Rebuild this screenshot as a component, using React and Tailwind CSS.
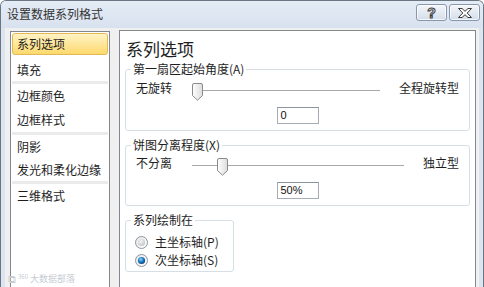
import React from "react";

const cjk = "font-['Noto_Sans_CJK_SC','Noto_Sans',sans-serif]";

const navGroups = [
  [
    { label: "系列选项", h: "h-[22px]", selected: true },
    { label: "填充", h: "h-[22px] mt-[4px]" },
  ],
  [
    { label: "边框颜色", h: "h-[24px]" },
    { label: "边框样式", h: "h-[24px]" },
  ],
  [
    { label: "阴影", h: "h-[23px]" },
    { label: "发光和柔化边缘", h: "h-[23px]" },
  ],
  [{ label: "三维格式", h: "h-[23px]" }],
];

function TitleButton({ children }) {
  return (
    <div className="w-[31px] h-[17px] rounded-[3px] border border-[#8797ad] bg-gradient-to-b from-[#f4f7fb] to-[#d3dde9] shadow-[inset_0_0_0_1px_rgba(255,255,255,0.7)] flex items-center justify-center">
      {children}
    </div>
  );
}

function Thumb() {
  return (
    <svg width="11" height="18" viewBox="0 0 11 18">
      <defs>
        <linearGradient id="thumbFill" x1="0" x2="1" y1="0" y2="0">
          <stop offset="0" stopColor="#ffffff" />
          <stop offset="1" stopColor="#dcdcdc" />
        </linearGradient>
      </defs>
      <path
        d="M2 0.5 H9 Q10.5 0.5 10.5 2 V12.5 L5.5 17.2 L0.5 12.5 V2 Q0.5 0.5 2 0.5 Z"
        fill="url(#thumbFill)"
        stroke="#8a8a8a"
      />
    </svg>
  );
}

function Slider({ pct }) {
  return (
    <div className="relative h-[16px] flex-1 ml-[20px] mr-[19px]">
      <div className="absolute left-0 right-0 top-[10px] h-px bg-[#a8a8a8]" />
      <div className="absolute top-[3px]" style={{ left: `calc((100% - 11px) * ${pct})` }}>
        <Thumb />
      </div>
    </div>
  );
}

function GroupBox({ legend, className = "", children }) {
  return (
    <div className={`relative border border-[#d5dfe5] rounded-[3px] ${className}`}>
      <span className="absolute -top-[9px] left-[5px] px-[2px] bg-white text-[12px] leading-[16px] text-[#1e1e1e] whitespace-nowrap">
        {legend}
      </span>
      {children}
    </div>
  );
}

function SliderGroup({ legend, from, to, pct, value, className = "" }) {
  return (
    <GroupBox legend={legend} className={className}>
      <div className="flex items-center h-[16px] px-[10px] text-[12px] leading-[16px] text-[#1e1e1e]">
        <span className="whitespace-nowrap">{from}</span>
        <Slider pct={pct} />
        <span className="whitespace-nowrap">{to}</span>
      </div>
      <div className="flex justify-center mt-[11px] pb-[6px]">
        <div className="w-[42px] h-[17px] border border-[#a5acb5] border-t-[#8e949c] pl-[3px] text-[11px] leading-[15px] text-[#111] font-['Liberation_Sans',sans-serif]">
          {value}
        </div>
      </div>
    </GroupBox>
  );
}

function Radio({ checked }) {
  return (
    <svg width="13" height="13" viewBox="0 0 13 13">
      <defs>
        <linearGradient id={checked ? "rOn" : "rOff"} x1="0" y1="0" x2="1" y2="1">
          <stop offset="0" stopColor="#e6e6e6" />
          <stop offset="1" stopColor="#ffffff" />
        </linearGradient>
        <radialGradient id="dot" cx="0.4" cy="0.35" r="0.7">
          <stop offset="0" stopColor="#8fd3ff" />
          <stop offset="0.5" stopColor="#1f7fc4" />
          <stop offset="1" stopColor="#0b3f74" />
        </radialGradient>
        <radialGradient id="off" cx="0.4" cy="0.35" r="0.7">
          <stop offset="0" stopColor="#f4f4f4" />
          <stop offset="1" stopColor="#c4c4c4" />
        </radialGradient>
      </defs>
      <circle cx="6.5" cy="6.5" r="6" fill={`url(#${checked ? "rOn" : "rOff"})`} stroke="#8b96a0" />
      <circle cx="6.5" cy="6.5" r="3.6" fill={checked ? "url(#dot)" : "url(#off)"} />
    </svg>
  );
}

export default function App() {
  return (
    <div className={`w-[484px] h-[287px] overflow-hidden flex flex-col bg-[#dbe4ef] border border-b-0 border-[#6b7684] rounded-t-[6px] ${cjk}`}>
      {/* title bar */}
      <div className="h-[27px] shrink-0 flex items-start bg-gradient-to-b from-[#e4ecf6] to-[#d8e2ee]">
        <div className="pl-[6px] pt-[4px] text-[12px] leading-[18px] text-[#333]">设置数据系列格式</div>
        <div className="ml-auto flex gap-[2px] pt-[3px] pr-[3px]">
          <TitleButton>
            <span className="text-[14px] leading-[14px] font-bold text-white [-webkit-text-stroke:1px_#3c3c3c] font-['Liberation_Sans',sans-serif]">?</span>
          </TitleButton>
          <TitleButton>
            <svg width="14" height="10" viewBox="0 0 14 10">
              <path
                d="M0.5 0.5 H4 L7 3.3 L10 0.5 H13.5 L9.2 5 L13.5 9.5 H10 L7 6.7 L4 9.5 H0.5 L4.8 5 Z"
                fill="#fff"
                stroke="#3a3a3a"
                strokeWidth="1"
                strokeLinejoin="round"
              />
            </svg>
          </TitleButton>
        </div>
      </div>

      {/* client area */}
      <div className="relative flex-1 min-h-0 overflow-hidden mx-[4px] bg-[#f0f0f0] flex items-start pl-[5px]">
        {/* nav list */}
        <div className="mt-[3px] w-[100px] h-[270px] shrink-0 bg-white border border-[#828790] pt-[1px]">
          {navGroups.map((group, gi) => (
            <div key={gi}>
              {gi > 0 && <div className="h-[3px] mx-[1px] bg-[#ebebeb]" />}
              {group.map((item) => (
                <div
                  key={item.label}
                  className={`${item.h} mx-[1px] flex items-center text-[12px] leading-[16px] text-[#1e1e1e] whitespace-nowrap ${
                    item.selected
                      ? "border border-[#e3b857] rounded-[3px] bg-gradient-to-b from-[#fff3c4] to-[#fdd96b] pl-[4px]"
                      : "pl-[5px]"
                  }`}
                >
                  {item.label}
                </div>
              ))}
            </div>
          ))}
        </div>

        {/* options panel */}
        <div className="ml-[9px] mt-[2px] w-[357px] h-[270px] shrink-0 bg-white border border-[#828790] px-[5px]">
          <div className="mt-[8px] pl-[1px] h-[20px] text-[17px] leading-[20px] text-[#1e1e1e]">系列选项</div>

          <SliderGroup
            className="mt-[10px] pt-[10px]"
            legend="第一扇区起始角度(A)"
            from="无旋转"
            to="全程旋转型"
            pct={0}
            value="0"
          />

          <SliderGroup
            className="mt-[14px] pt-[9px]"
            legend="饼图分离程度(X)"
            from="不分离"
            to="独立型"
            pct={0.125}
            value="50%"
          />

          <GroupBox legend="系列绘制在" className="mt-[14px] w-[109px] pt-[12px] pb-[2px] pl-[9px]">
            {[
              { label: "主坐标轴(P)", checked: false },
              { label: "次坐标轴(S)", checked: true },
            ].map((r) => (
              <div key={r.label} className="h-[18px] flex items-center gap-[7px] text-[12px] leading-[16px] text-[#1e1e1e] whitespace-nowrap">
                <Radio checked={r.checked} />
                <span>{r.label}</span>
              </div>
            ))}
          </GroupBox>
        </div>

        {/* faint watermark */}
        <div className="absolute left-[3px] bottom-[3px] flex items-end gap-[2px] text-[#c7ccd3] select-none">
          <span className="text-[11px] leading-[11px]">⧉</span>
          <span className="text-[6px] leading-[8px] self-start">360</span>
          <span className="text-[9px] leading-[10px]">大数据部落</span>
        </div>
      </div>
    </div>
  );
}
